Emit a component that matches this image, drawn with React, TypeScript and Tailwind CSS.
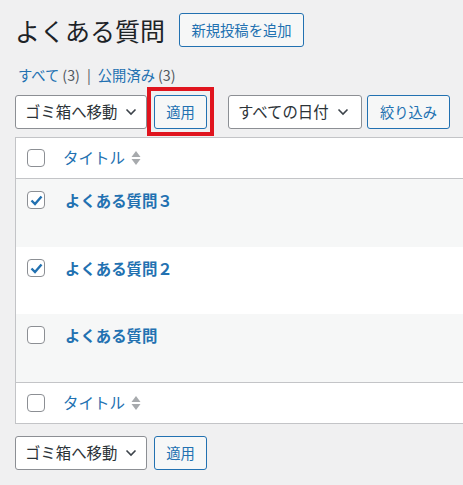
const font = "font-['Noto_Sans_CJK_JP','Noto_Sans',sans-serif]";

function Chevron() {
    return (
        <svg width="12" height="8" viewBox="0 0 12 8" className="ml-[8px]" aria-hidden="true">
            <path d="M1.5 1.5 L6 6 L10.5 1.5" fill="none" stroke="#3c434a" strokeWidth="1.6" />
        </svg>
    );
}

function Select({ label, w }: { label: string; w: string }) {
    return (
        <div
            className={`flex h-[34px] ${w} items-center rounded-[3px] border border-[#8c8f94] bg-white pl-[9px] text-[15.4px] text-[#2c3338]`}
        >
            {label}
            <Chevron />
        </div>
    );
}

function Button({ label, w }: { label: string; w: string }) {
    return (
        <div
            className={`flex h-[34px] ${w} items-center justify-center rounded-[3px] border border-[#2271b1] bg-[#f6f7f7] text-[14.3px] text-[#2271b1]`}
        >
            {label}
        </div>
    );
}

function Checkbox({ checked }: { checked?: boolean }) {
    return (
        <div className="flex h-[18px] w-[18px] items-center justify-center rounded-[4px] border border-[#8c8f94] bg-white">
            {checked && (
                <svg width="13" height="11" viewBox="0 0 13 11" aria-hidden="true">
                    <path d="M1.5 5.5 L5 9 L11.5 1.5" fill="none" stroke="#2271b1" strokeWidth="2.4" />
                </svg>
            )}
        </div>
    );
}

function SortArrows() {
    return (
        <svg width="10" height="16" viewBox="0 0 10 16" className="ml-[6px]" aria-hidden="true">
            <path d="M5 1 L9.5 7 L0.5 7 Z" fill="#a7aaad" />
            <path d="M0.5 9 L9.5 9 L5 15 Z" fill="#a7aaad" />
        </svg>
    );
}

function HeadRow({ top }: { top?: boolean }) {
    return (
        <div
            className={`flex h-[41px] items-center bg-white pl-[11px] ${top ? "border-b" : "border-t"} border-[#c3c4c7]`}
        >
            <Checkbox />
            <span className="ml-[18px] text-[15.5px] text-[#2271b1]">タイトル</span>
            <SortArrows />
        </div>
    );
}

const posts = [
    { title: "よくある質問３", checked: true, bg: "bg-[#f6f7f7]", h: "h-[68px]" },
    { title: "よくある質問２", checked: true, bg: "bg-white", h: "h-[67px]" },
    { title: "よくある質問", checked: false, bg: "bg-[#f6f7f7]", h: "h-[68px]" },
];

export default function App() {
    return (
        <div className={`h-[485px] w-[463px] overflow-hidden bg-[#f0f0f1] ${font}`}>
            <div className="w-[480px] pl-[15px]">
                <div className="flex h-[34px] items-center mt-[13px]">
                    <h1 className="text-[25px] leading-[34px] text-[#1d2327]">よくある質問</h1>
                    <div className="ml-[14px] flex h-[34px] w-[125px] items-center justify-center rounded-[3px] border border-[#2271b1] bg-[#f6f7f7] text-[14.3px] text-[#2271b1]">
                        新規投稿を追加
                    </div>
                </div>

                <div className="mt-[18px] flex h-[20px] items-center pl-[3px] text-[14.3px] text-[#2271b1]">
                    すべて <span className="ml-[3px] text-[#50575e]">(3)</span>
                    <span className="mx-[7px] text-[#50575e]">|</span>
                    公開済み <span className="ml-[3px] text-[#50575e]">(3)</span>
                </div>

                <div className="mt-[2px] flex h-[49px] items-center">
                    <Select label="ゴミ箱へ移動" w="w-[132px]" />
                    <div className="flex h-[49px] w-[67px] items-center justify-center border-[4px] border-[#e0141e]">
                        <Button label="適用" w="w-[53px]" />
                    </div>
                    <div className="ml-[14px]">
                        <Select label="すべての日付" w="w-[134px]" />
                    </div>
                    <div className="ml-[5px]">
                        <Button label="絞り込み" w="w-[83px]" />
                    </div>
                </div>

                <div className="mt-[1px] border border-[#c3c4c7]">
                    <HeadRow top />
                    {posts.map((p) => (
                        <div key={p.title} className={`flex ${p.h} items-start pl-[11px] pt-[12px] ${p.bg}`}>
                            <Checkbox checked={p.checked} />
                            <span className="ml-[20px] text-[15.4px] font-bold leading-[18px] text-[#2271b1]">
                                {p.title}
                            </span>
                        </div>
                    ))}
                    <HeadRow />
                </div>

                <div className="mt-[12px] flex items-center gap-[7px]">
                    <Select label="ゴミ箱へ移動" w="w-[132px]" />
                    <Button label="適用" w="w-[53px]" />
                </div>
            </div>
        </div>
    );
}
